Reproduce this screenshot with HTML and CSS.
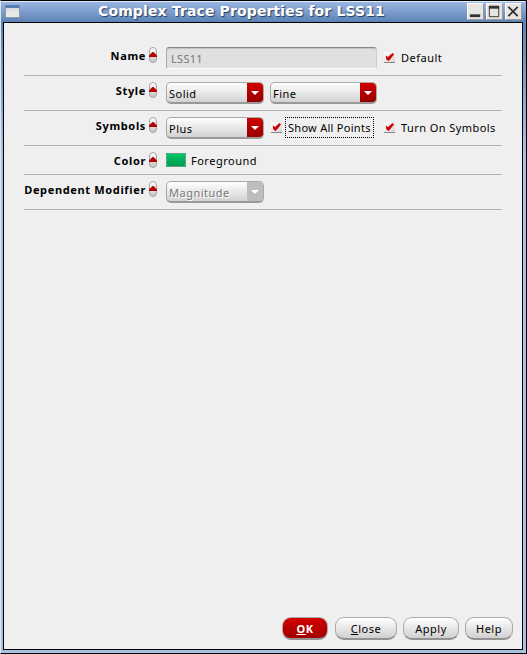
FILE: index.html
```html
<!DOCTYPE html>
<html lang="en">
<head>
<meta charset="utf-8">
<title>Complex Trace Properties for LSS11</title>
<link rel="stylesheet" href="styles.css">
</head>
<body>
<svg width="0" height="0" class="defs">
  <defs>
    <linearGradient id="pill" x1="0" y1="0" x2="0" y2="1"><stop offset="0" stop-color="#fff"/><stop offset="1" stop-color="#c4c4c4"/></linearGradient>
    <linearGradient id="box" x1="0" y1="0" x2="1" y2="1"><stop offset="0" stop-color="#fff"/><stop offset="1" stop-color="#d4d4d4"/></linearGradient>
    <symbol id="spin" viewBox="0 0 8 16"><rect x=".5" y=".5" width="7" height="15" rx="3.5" fill="url(#pill)" stroke="#a3a3a3"/><path d="M0 10V8.5L3.5 5H4.5L8 8.5V10Z" fill="#b50000"/></symbol>
    <symbol id="check" viewBox="0 0 12 12"><rect x="0" y="0" width="11" height="11" fill="url(#box)"/><path d="M0 10.5H11" stroke="#888"/><path d="M1.5 3.5L4 5L8.5 1L10 2.5L4.8 9L2.5 7.8Z" fill="#cf0000"/></symbol>
  </defs>
</svg>
<div class="window">
  <header class="titlebar">
    <span class="app-icon"></span>
    <h1>Complex Trace Properties for LSS11</h1>
    <div class="controls">
      <svg viewBox="0 0 16 16"><path d="M2 12.5H13" stroke="#333" stroke-width="3"/></svg>
      <svg viewBox="0 0 16 16"><path d="M2.5 2.5H12.5V13.5H2.5Z" fill="none" stroke="#333"/><path d="M2 3.5H13" stroke="#333" stroke-width="3"/></svg>
      <svg viewBox="0 0 16 16"><path d="M2.5 3L12.5 13M12.5 3L2.5 13" stroke="#333" stroke-width="2"/></svg>
    </div>
  </header>
  <main>
    <div class="form">
      <div class="row"><label class="name">Name</label><svg class="spin"><use href="#spin"/></svg>
        <div class="field">LSS11</div><svg class="check far"><use href="#check"/></svg><span class="text">Default</span></div>
      <div class="row"><label class="name">Style</label><svg class="spin"><use href="#spin"/></svg>
        <div class="combo">Solid<i></i></div><div class="combo wide">Fine<i></i></div></div>
      <div class="row"><label class="name">Symbols</label><svg class="spin"><use href="#spin"/></svg>
        <div class="combo">Plus<i></i></div><svg class="check near"><use href="#check"/></svg><span class="text focus">Show All Points</span><svg class="check last"><use href="#check"/></svg><span class="text tight">Turn On Symbols</span></div>
      <div class="row short"><label class="name">Color</label><svg class="spin"><use href="#spin"/></svg>
        <div class="swatch"><div class="swatch-fill"></div></div><span class="foreground">Foreground</span></div>
      <div class="row"><label class="name">Dependent Modifier</label><svg class="spin"><use href="#spin"/></svg>
        <div class="combo disabled">Magnitude<i></i></div></div>
    </div>
    <footer>
      <button class="ok"><u>O</u>K</button><button class="close"><u>C</u>lose</button><button class="apply">Apply</button><button class="help">Help</button>
    </footer>
  </main>
</div>
</body>
</html>
```
FILE: styles.css
```css
* { box-sizing: border-box; }
body { margin: 0; font: 11px/16px "Noto Sans", "Open Sans", sans-serif; letter-spacing: .5px; color: #000; }
.defs { position: absolute; }
.window { width: 527px; height: 654px; border: 1px solid #000; border-left-color: #dce7f5; padding: 0 3px 3px 2px; background: linear-gradient(#9db9e2, #5e83b5 22px, #a9c1df 150px, #a9c1df); display: flex; flex-direction: column; }
.titlebar { height: 21px; margin: 0 -3px 0 -2px; padding: 0 4px 0 4px; border-top: 1px solid #e0ebfa; background: linear-gradient(#9ab6e2, #5c82b5); display: flex; align-items: center; }
.app-icon { width: 15px; height: 13px; margin-top: -1px; border: 1px solid #8b98a8; border-top: 3px solid #587fb4; background: linear-gradient(#cfdae5, #e9e9e5 4px); }
h1 { flex: 1; margin: -2px 0 0; padding-left: 78px; font: bold 14px/20px "DejaVu Sans", sans-serif; letter-spacing: .13px; color: #fff; text-shadow: 1px 1px 1px #263d5f; white-space: nowrap; }
.controls { display: flex; gap: 2px; margin-top: -2px; }
.controls svg { width: 17px; height: 17px; background: #e5e5e1; border: 1px solid #fff; border-right-color: #999; border-bottom-color: #999; }
main { flex: 1; border: 1px solid #000; background: #efefef; display: flex; flex-direction: column; padding: 18px 20px 9px 20px; }
.form { flex: 1; }
.row { height: 35px; padding-top: 6px; border-bottom: 1px solid #b2b2b2; display: flex; align-items: flex-start; white-space: nowrap; }
.row.short { height: 29px; }
.name { width: 122px; text-align: right; font-weight: bold; padding-top: 1px; letter-spacing: .65px; flex: none; }
.spin { width: 8px; height: 16px; margin: 0 9px 0 3px; flex: none; }
.field { width: 211px; height: 22px; padding: 2px 4px; background: #e0e0e0; border: 1px solid #aaa; border-top-color: #888; border-right-color: #ccc; border-bottom-color: #fff; border-radius: 3px; box-shadow: inset 0 1px #c4c4c4; line-height: 18px; color: #777; letter-spacing: .3px; }
.combo { position: relative; width: 98px; height: 22px; padding: 3px 2px; border: 1px solid #aaa; border-bottom: 2px solid #999; border-radius: 5px; background: linear-gradient(#fff, #d2d2d2); overflow: hidden; flex: none; }
.combo i { position: absolute; right: 0; top: 0; width: 16px; height: 100%; background: linear-gradient(#d00000, #970000); }
.combo i::after { content: ""; position: absolute; left: 4px; top: 8px; border: 4px solid transparent; border-top-color: #fff; border-bottom: 0; }
.combo.wide { width: 107px; margin-left: 6px; }
.combo.disabled { color: #777; text-shadow: 1px 1px #fff; }
.combo.disabled i { background: #bdbdbd; }
.check { width: 12px; height: 12px; margin-top: 5px; flex: none; }
.far { margin-left: 7px; }
.near { margin-left: 7px; }
.last { margin-left: 10px; }
.text { margin: 3px 0 0 5px; }
.tight { letter-spacing: .43px; }
.focus { width: 89px; height: 21px; margin: 0 0 0 2px; padding: 2px 2px; border: 1px dotted #000; letter-spacing: .28px; }
.swatch { width: 20px; height: 14px; margin-top: 1px; background: #00c566; }
.swatch-fill { height: 14px; border: 1px solid #6f9a83; border-radius: 4px; background: linear-gradient(#00c564, #009c50); }
.foreground { margin: 1px 0 0 5px; }
footer { display: flex; justify-content: flex-end; margin-right: -11px; }
button { height: 23px; padding: 2px 0 0; border: 1px solid #aaa; border-bottom: 2px solid #929292; border-radius: 9px; background: linear-gradient(#fff, #d0d0d0); font: inherit; letter-spacing: inherit; }
.ok { width: 46px; margin-right: 7px; color: #fff; font-weight: bold; background: linear-gradient(#d40000, #a00000); }
.close { width: 62px; margin-right: 6px; }
.apply { width: 56px; margin-right: 6px; }
.help { width: 48px; }
```
